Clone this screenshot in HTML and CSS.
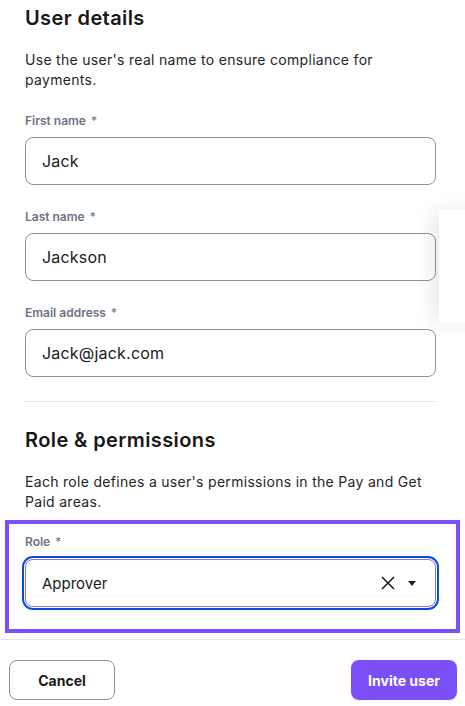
FILE: index.html
```html
<!DOCTYPE html>
<html lang="en">
<head>
    <meta charset="UTF-8">
    <meta name="viewport" content="width=device-width, initial-scale=1.0">
    <title>Invite user</title>
    <link rel="stylesheet" href="styles.css">
</head>
<body>

    <div class="panel">
        <div class="content">
            <h2>User details</h2>
            <p class="intro">Use the user's real name to ensure compliance for payments.</p>

            <div class="field">
                <label for="firstName">First name <span class="req">*</span></label>
                <input type="text" id="firstName" value="Jack">
            </div>

            <div class="field">
                <label for="lastName">Last name <span class="req">*</span></label>
                <input type="text" id="lastName" value="Jackson">
            </div>

            <div class="field">
                <label for="email">Email address <span class="req">*</span></label>
                <input type="text" id="email" value="Jack@jack.com">
            </div>

            <hr class="divider">

            <h2>Role &amp; permissions</h2>
            <p class="intro">Each role defines a user's permissions in the Pay and Get Paid areas.</p>

            <div class="role-box">
                <label>Role <span class="req">*</span></label>
                <div class="select">
                    <span class="select-value">Approver</span>
                    <svg class="clear-icon" width="14" height="14" viewBox="0 0 14 14">
                        <path d="M1 1 L13 13 M13 1 L1 13" stroke="#1f1f1f" stroke-width="1.6" fill="none"/>
                    </svg>
                    <svg class="caret-icon" width="8" height="5" viewBox="0 0 8 5">
                        <path d="M0 0 H8 L4 5 Z" fill="#1f1f1f"/>
                    </svg>
                </div>
            </div>
        </div>

        <div class="footer">
            <button class="btn btn-secondary">Cancel</button>
            <button class="btn btn-primary">Invite user</button>
        </div>

        <!-- edge of a floating panel peeking in from the right -->
        <div class="side-peek"></div>
    </div>

</body>
</html>
```

FILE: styles.css
```css
* {
    margin: 0;
    padding: 0;
    box-sizing: border-box;
}

body {
    font-family: Inter, "Open Sans", sans-serif;
    background-color: #ffffff;
    color: #1a1a1a;
}

.panel {
    position: relative;
    width: 465px;
    height: 706px;
    overflow: hidden;
}

.content {
    padding: 4px 29px 0 25px;
}

h2 {
    font-size: 20px;
    line-height: 28px;
    font-weight: 600;
    letter-spacing: 0.4px;
    color: #171717;
}

.intro {
    margin-top: 18px;
    font-size: 14px;
    line-height: 20px;
    letter-spacing: 0.3px;
    color: #262626;
}

.field {
    margin-top: 24px;
}

.field:first-of-type {
    margin-top: 23px;
}

.field label,
.role-box label {
    display: block;
    font-size: 12px;
    line-height: 16px;
    font-weight: 600;
    color: #6b7385;
}

.req {
    font-weight: 400;
    margin-left: 2px;
}

.field input {
    display: block;
    width: 100%;
    height: 48px;
    margin-top: 8px;
    padding: 0 16px;
    font-family: inherit;
    font-size: 16px;
    letter-spacing: 0.2px;
    color: #1a1a1a;
    border: 1px solid #8a93a6;
    border-radius: 8px;
    outline: none;
}

.divider {
    border: none;
    border-top: 1px solid #e6e6e9;
    margin-top: 24px;
    margin-bottom: 24px;
}

.role-box {
    margin: 8px -24px 0 -20px;
    border: 4px solid #7b4ff7;
    padding: 10px 20px 22px 16px;
}

.select {
    display: flex;
    align-items: center;
    height: 48px;
    margin-top: 9px;
    padding: 0 19px 0 16px;
    border: 1px solid #8f6cf5;
    border-radius: 8px;
    outline: 2px solid #0a4fd3;
    outline-offset: 1px;
}

.select-value {
    flex: 1;
    font-size: 15px;
    color: #1a1a1a;
}

.clear-icon {
    margin-right: 13px;
}

.footer {
    margin-top: 6px;
    border-top: 1px solid #e6e6ea;
    padding: 20px 8px 0 9px;
    display: flex;
    justify-content: space-between;
}

.btn {
    width: 106px;
    height: 40px;
    border-radius: 8px;
    font-family: inherit;
    font-size: 14px;
    font-weight: 700;
    cursor: pointer;
}

.btn-secondary {
    background-color: #ffffff;
    color: #1a1a1a;
    border: 1px solid #8a93a6;
}

.btn-primary {
    background-color: #7b4ff7;
    color: #ffffff;
    border: none;
}

.side-peek {
    position: absolute;
    left: 439px;
    top: 210px;
    width: 60px;
    height: 113px;
    background-color: #ffffff;
    box-shadow: -8px 0 18px rgba(0, 0, 0, 0.08);
}
```
